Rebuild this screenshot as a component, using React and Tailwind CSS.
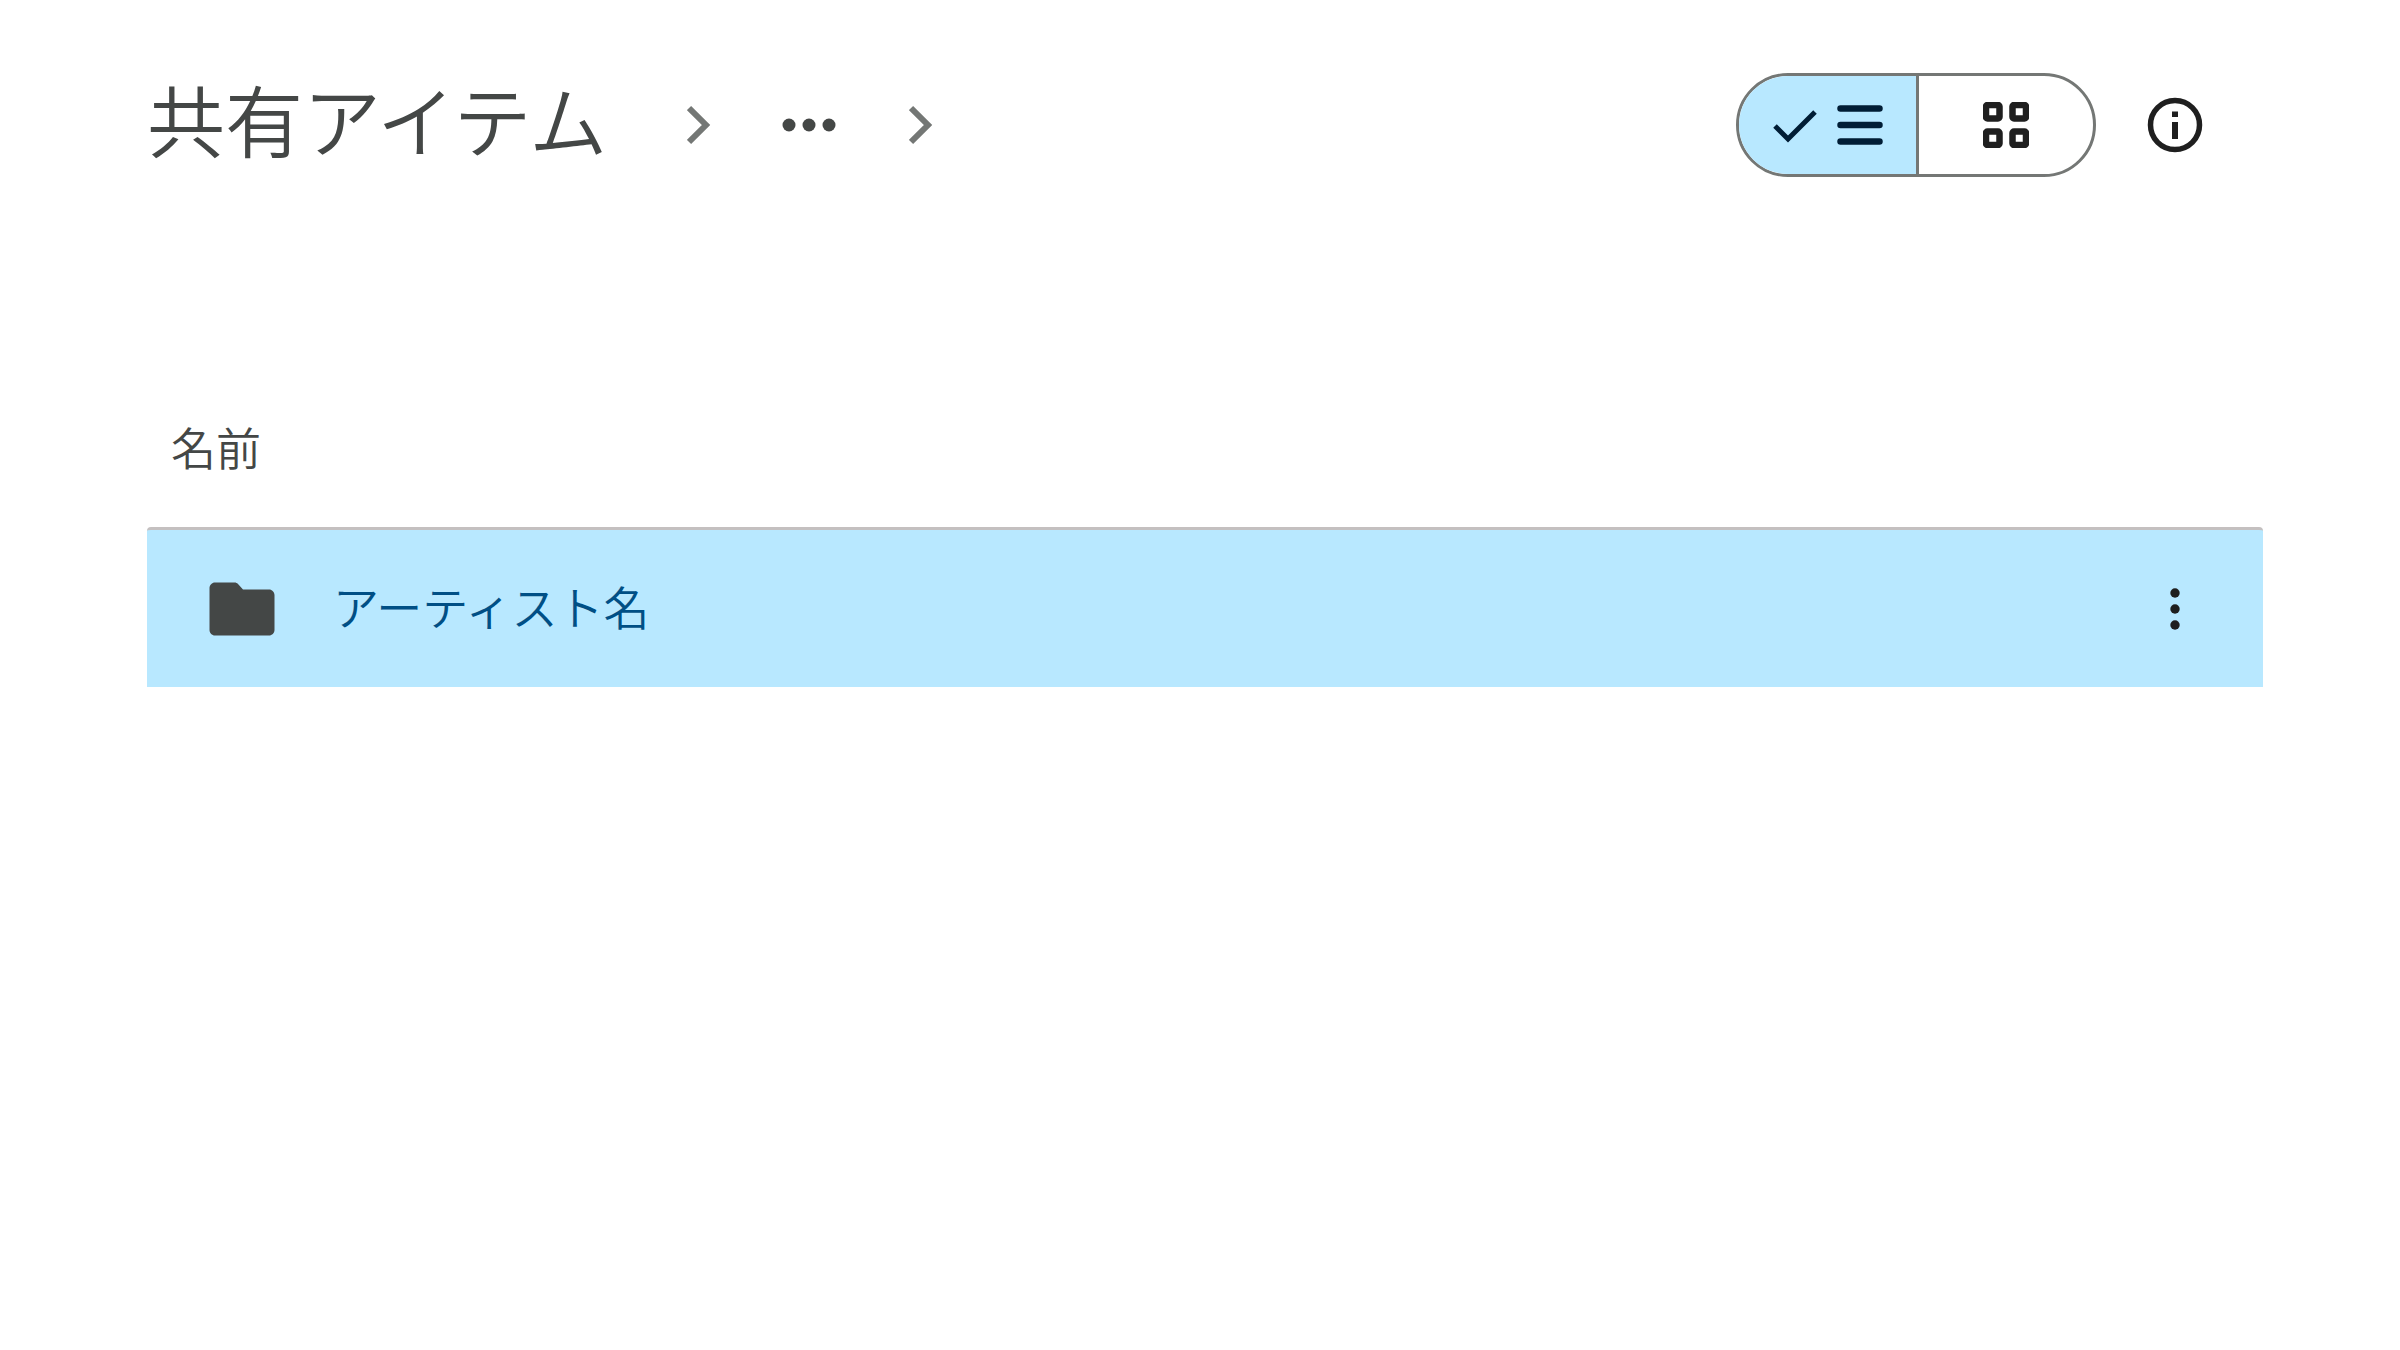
import React, { useState } from "react";

const items = [{ id: 1, name: "アーティスト名" }];

const Chevron = () => (
  <svg className="h-10 w-6" viewBox="0 0 24 40" fill="none" aria-hidden="true">
    <path d="M2 3L19 20L2 37" stroke="#747775" strokeWidth="6" />
  </svg>
);

const FolderIcon = () => (
  <svg className="h-[54px] w-[66px] shrink-0" viewBox="0 0 66 54" aria-hidden="true">
    <path
      d="M6 0.500H25.500C27 0.500 28 1 29 2L34 7.500H60C63 7.500 65.500 10 65.500 13V48C65.500 51 63 53.500 60 53.500H6C3 53.500 0.500 51 0.500 48V6C0.500 3 3 0.500 6 0.500Z"
      fill="#444746"
    />
  </svg>
);

const App = () => {
  const [view, setView] = useState("list");

  return (
    <main className="min-h-screen bg-white pl-[147px] pr-[137px] pt-[73px] font-['Noto_Sans_CJK_JP',sans-serif] font-[350] text-[#444746]">
      <header className="flex items-center justify-between pr-[55px]">
        <nav aria-label="フォルダ" className="flex items-center">
          <a href="#shared" className="pb-[14px] text-[78px] leading-[90px]">
            共有アイテム
          </a>
          <span className="ml-20">
            <Chevron />
          </span>
          <button aria-label="その他" className="ml-[70px]">
            <svg className="h-4 w-14" viewBox="0 0 56 16" fill="#444746" aria-hidden="true">
              <circle cx="8" cy="8" r="6.500" />
              <circle cx="28" cy="8" r="6.500" />
              <circle cx="48" cy="8" r="6.500" />
            </svg>
          </button>
          <span className="ml-[72px]">
            <Chevron />
          </span>
        </nav>

        <div className="flex items-center gap-[46px]">
          <div className="flex h-[104px] w-[360px] overflow-hidden rounded-full border-3 border-[#747775]">
            <button
              aria-label="リスト"
              aria-pressed={view === "list"}
              onClick={() => setView("list")}
              className="flex w-1/2 items-center justify-center gap-5 bg-[#b8e8ff]"
            >
              <svg className="h-9 w-11" viewBox="0 0 44 36" fill="none" aria-hidden="true">
                <path d="M2 19L15 32L42 5" stroke="#001d35" strokeWidth="5" />
              </svg>
              <svg className="h-10 w-[46px]" viewBox="0 0 46 40" fill="none" aria-hidden="true">
                <path
                  d="M3.500 3.500H42.500M3.500 20H42.500M3.500 36.500H42.500"
                  stroke="#001d35"
                  strokeWidth="6.500"
                  strokeLinecap="round"
                />
              </svg>
            </button>
            <button
              aria-label="グリッド"
              aria-pressed={view === "grid"}
              onClick={() => setView("grid")}
              className="flex w-1/2 items-center justify-center border-l-3 border-[#747775]"
            >
              <svg
                className="size-[46px]"
                viewBox="0 0 46 46"
                fill="none"
                stroke="#1f1f1f"
                strokeWidth="6.500"
                aria-hidden="true"
              >
                <rect x="3" y="3" width="13.500" height="13.500" rx="1.500" />
                <rect x="29.500" y="3" width="13.500" height="13.500" rx="1.500" />
                <rect x="3" y="29.500" width="13.500" height="13.500" rx="1.500" />
                <rect x="29.500" y="29.500" width="13.500" height="13.500" rx="1.500" />
              </svg>
            </button>
          </div>
          <button aria-label="詳細を表示">
            <svg className="size-[66px]" viewBox="0 0 66 66" fill="none" aria-hidden="true">
              <circle cx="33" cy="33" r="24.500" stroke="#1f1f1f" strokeWidth="5.500" />
              <path d="M30 19.500H36V25H30ZM30 30H36V47H30Z" fill="#1f1f1f" />
            </svg>
          </button>
        </div>
      </header>

      <table className="mt-[238px] w-full border-separate border-spacing-0">
        <thead>
          <tr>
            <th
              colSpan="2"
              className="pb-12 pl-6 text-left text-[45px] leading-[64px] font-[350]"
            >
              名前
            </th>
          </tr>
        </thead>
        <tbody>
          {items.map((item) => (
            <tr key={item.id} className="h-40">
              <td className="rounded-tl border-t-3 border-[#c4c0c0] bg-[#b8e8ff] pl-[62px]">
                <a href="#folder" className="flex items-center gap-[58px] text-[46px] leading-[64px] text-[#004f85]">
                  <FolderIcon />
                  <span className="pb-2">{item.name}</span>
                </a>
              </td>
              <td className="rounded-tr border-t-3 border-[#c4c0c0] bg-[#b8e8ff] pr-[55px]">
                <button aria-label="その他の操作" className="ml-auto block">
                  <svg className="size-[66px]" viewBox="0 0 66 66" fill="#1f1f1f" aria-hidden="true">
                    <circle cx="33" cy="17" r="4.700" />
                    <circle cx="33" cy="33" r="4.700" />
                    <circle cx="33" cy="49" r="4.700" />
                  </svg>
                </button>
              </td>
            </tr>
          ))}
        </tbody>
      </table>
    </main>
  );
};

export default App;
